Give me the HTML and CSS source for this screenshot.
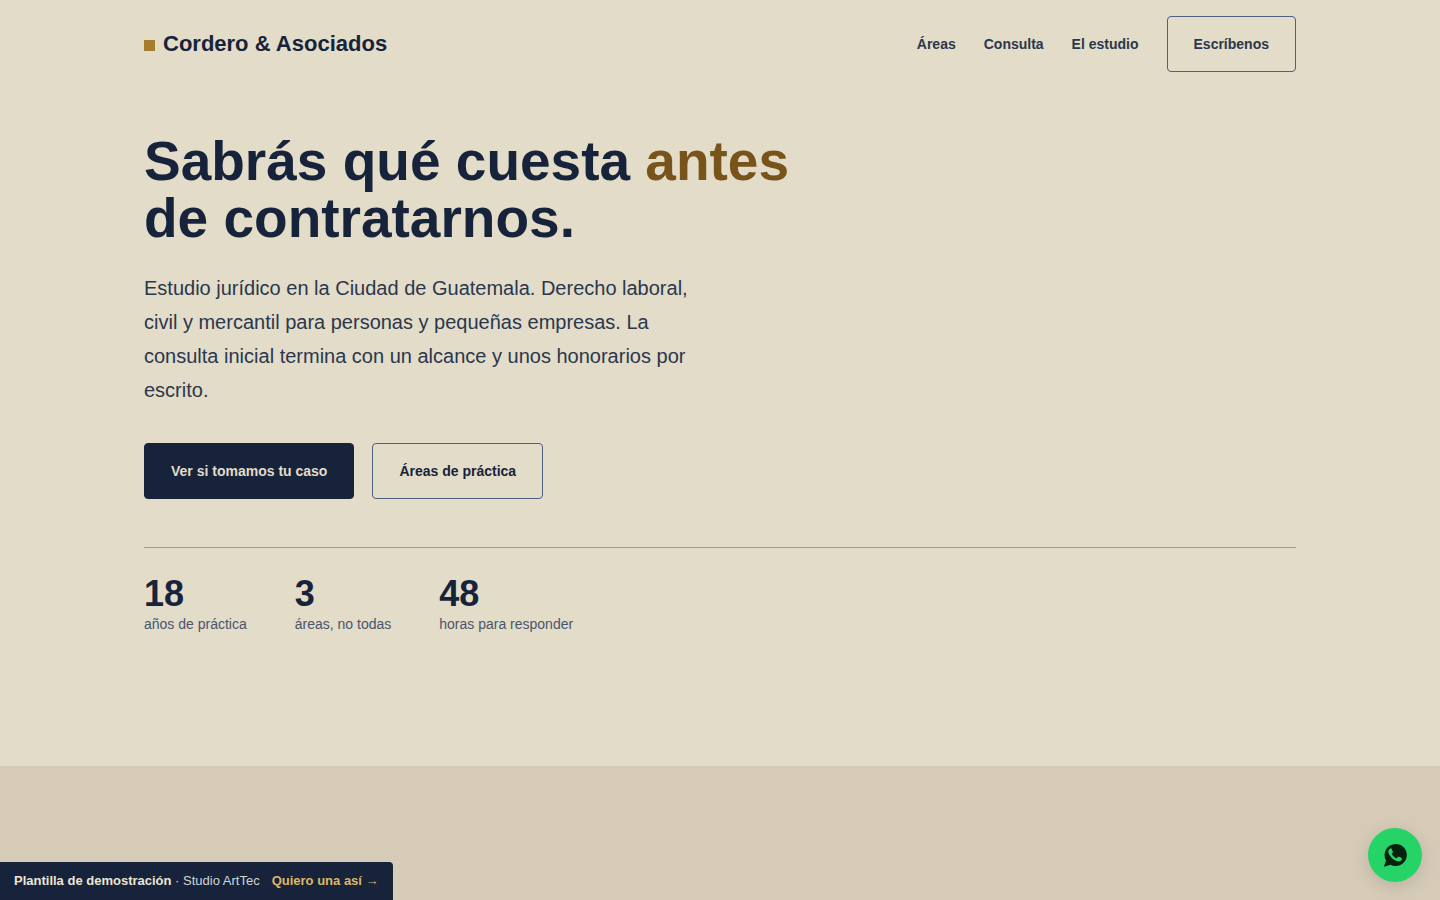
FILE: index.html
```
<!DOCTYPE html>
<html lang="es">
<head>
    <meta charset="UTF-8">
    <meta name="viewport" content="width=device-width, initial-scale=1.0">
    <title>Cordero &amp; Asociados</title>
    <link rel="stylesheet" href="styles.css">
</head>
<body>
    <header class="wrap header">
        <a href="#inicio" class="brand"><span class="brand-mark"></span>Cordero &amp; Asociados</a>
        <nav class="nav">
            <a href="#areas">Áreas</a>
            <a href="#consulta">Consulta</a>
            <a href="#estudio">El estudio</a>
            <a href="#contacto" class="btn btn-outline">Escríbenos</a>
        </nav>
    </header>

    <main>
        <section class="wrap hero" id="inicio">
            <h1>Sabrás qué cuesta <em>antes</em> de contratarnos.</h1>
            <p class="lead">Estudio jurídico en la Ciudad de Guatemala. Derecho laboral, civil y mercantil para personas y pequeñas empresas. La consulta inicial termina con un alcance y unos honorarios por escrito.</p>
            <div class="actions">
                <a href="#consulta" class="btn btn-primary">Ver si tomamos tu caso</a>
                <a href="#areas" class="btn btn-outline">Áreas de práctica</a>
            </div>
            <ul class="stats">
                <li><strong>18</strong><span>años de práctica</span></li>
                <li><strong>3</strong><span>áreas, no todas</span></li>
                <li><strong>48</strong><span>horas para responder</span></li>
            </ul>
        </section>

        <section class="band" id="areas"></section>
    </main>

    <!-- Demo ribbon -->
    <aside class="demo-bar">
        <span><b>Plantilla de demostración</b> · Studio ArtTec</span>
        <a href="#plantilla">Quiero una así →</a>
    </aside>

    <a href="#whatsapp" class="whatsapp" aria-label="WhatsApp">
        <svg viewBox="0 0 24 24" width="26" height="26" aria-hidden="true">
            <path class="bubble" d="M12.500 1.800A10.200 10.200 0 0 0 3.700 17.100L1.700 22.800L7.900 21A10.200 10.200 0 1 0 12.500 1.800z"/>
            <path class="phone" d="M9.100 6.600c-.2-.5-.4-.5-.7-.5h-.6c-.2 0-.6.1-.9.4-.3.3-1.100 1.100-1.100 2.600s1.100 3 1.300 3.200c.1.200 2.200 3.400 5.300 4.700 2.700 1 3.200.8 3.800.7.6 0 1.800-.7 2-1.400.2-.7.2-1.300.2-1.400-.1-.2-.3-.2-.6-.4l-2.200-1c-.3-.1-.5-.2-.7.1l-1 1.200c-.2.200-.3.200-.6.100-.3-.2-1.300-.5-2.500-1.500-.9-.8-1.500-1.800-1.700-2.100-.2-.3 0-.5.1-.6l.5-.6.3-.5c.1-.2 0-.4 0-.5z"/>
        </svg>
    </a>
</body>
</html>
```
FILE: styles.css
```
:root {
    --paper: #e2dcc9;
    --sand: #d6cbb6;
    --navy: #17233a;
    --slate: #2b374d;
    --muted: #4a556b;
    --line: #506080;
    --gold: #a67c2d;
    --bronze: #78531a;
}

* {
    box-sizing: border-box;
}

body {
    margin: 0;
    background: var(--paper);
    color: var(--navy);
    font-family: "Liberation Sans", Arial, sans-serif;
    font-size: 16px;
}

a {
    color: inherit;
    text-decoration: none;
}

.wrap {
    width: 80%;
    margin: 0 auto;
}

/* Header */
.header {
    display: flex;
    align-items: center;
    justify-content: space-between;
    padding: 16px 0;
}

.brand {
    display: flex;
    align-items: center;
    gap: 8px;
    font-size: 22px;
    font-weight: 700;
}

.brand-mark {
    width: 11px;
    height: 11px;
    margin-top: 2px;
    background: var(--gold);
}

.nav {
    display: flex;
    align-items: center;
    gap: 28px;
    color: var(--slate);
    font-size: 14px;
    font-weight: 700;
}

/* Buttons */
.btn {
    padding: 19px 26px;
    border: 1px solid var(--line);
    border-radius: 4px;
    font-size: 14px;
    font-weight: 700;
    line-height: 16px;
}

.btn-primary {
    background: var(--navy);
    border-color: var(--navy);
    color: var(--paper);
}

/* Hero */
.hero {
    padding: 45px 0 130px;
}

h1 {
    max-width: 700px;
    margin: 0 0 24px;
    font-size: 55px;
    line-height: 57px;
}

h1 em {
    color: var(--bronze);
    font-style: normal;
}

.lead {
    max-width: 560px;
    margin: 0 0 36px;
    color: var(--slate);
    font-size: 20px;
    line-height: 34px;
}

.actions {
    display: flex;
    flex-wrap: wrap;
    gap: 18px;
    margin-bottom: 48px;
}

.stats {
    display: flex;
    flex-wrap: wrap;
    gap: 48px;
    margin: 0;
    padding: 28px 0 0;
    border-top: 1px solid #959ca5;
    list-style: none;
}

.stats strong {
    display: block;
    font-size: 36px;
    line-height: 36px;
}

.stats span {
    display: block;
    color: var(--muted);
    font-size: 14px;
    line-height: 24px;
}

.band {
    min-height: 134px;
    background: var(--sand);
}

/* Floating elements */
.demo-bar {
    position: fixed;
    left: 0;
    bottom: 0;
    display: flex;
    gap: 12px;
    padding: 11px 14px;
    border-top-right-radius: 4px;
    background: var(--navy);
    color: #d5d6d2;
    font-size: 13px;
    line-height: 16px;
}

.demo-bar b {
    color: #ece6d5;
}

.demo-bar a {
    color: #dfb765;
    font-weight: 700;
}

.whatsapp {
    position: fixed;
    right: 18px;
    bottom: 18px;
    display: grid;
    place-items: center;
    width: 54px;
    height: 54px;
    border-radius: 50%;
    background: #25d366;
    box-shadow: 0 4px 16px rgba(23, 35, 58, 0.15);
}

.bubble {
    fill: #06210f;
}

.phone {
    fill: #25d366;
}
```
